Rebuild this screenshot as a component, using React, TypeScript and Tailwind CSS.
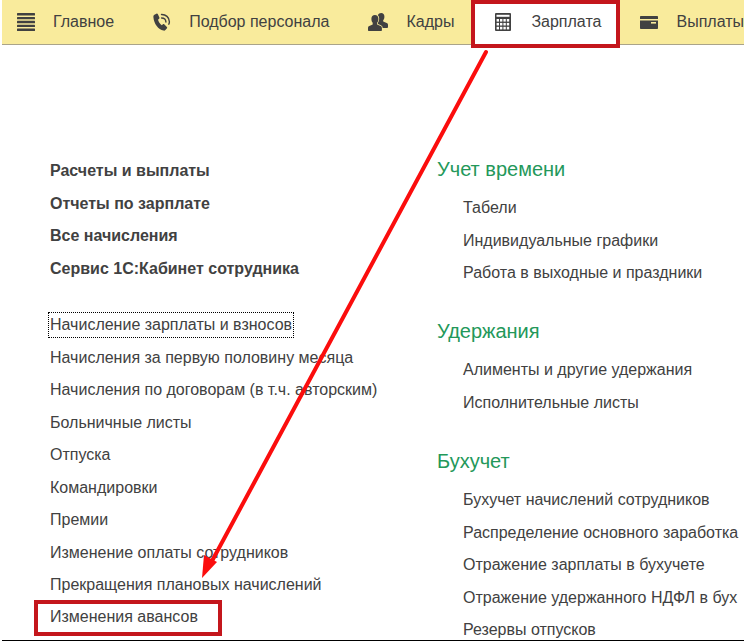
import type { ReactNode } from 'react';

type Section = {
  title: string;
  items: string[];
};

type NavItem = {
  label: string;
  icon: ReactNode;
  active?: boolean;
};

const MenuIcon: React.FC = () => (
  <svg width="18" height="18" viewBox="0 0 18 18" fill="currentColor" aria-hidden="true">
    <rect y="0" width="18" height="2.4" rx="0.5" />
    <rect y="3.9" width="18" height="2.4" rx="0.5" />
    <rect y="7.8" width="18" height="2.4" rx="0.5" />
    <rect y="11.7" width="18" height="2.4" rx="0.5" />
    <rect y="15.6" width="18" height="2.4" rx="0.5" />
  </svg>
);

const PhoneIcon: React.FC = () => (
  <svg width="18" height="18" viewBox="0 0 18 18" fill="none" aria-hidden="true">
    <path
      fill="currentColor"
      d="M1.4 1.8 3.4.7c.6-.3 1.2-.1 1.5.5l1.500 3.300c.2.500.1 1-.3 1.300L5 6.800c.6 2.200 1.800 4 3.700 5.400l1.300-.9c.5-.3 1-.2 1.400.1l2.500 2.500c.4.400.4.900.1 1.300l-1.600 1.900c-.5.5-1.200.7-1.900.5C5.300 16.300 1 11 .4 4.200c-.1-1.100.1-1.900 1-2.400Z"
    />
    <path stroke="currentColor" strokeWidth="1.4" strokeLinecap="round" d="M8.5 1.500c4.300-.1 7.700 2.700 7.900 7.200 0 .9-.2 1.800-.6 2.500" />
    <path stroke="currentColor" strokeWidth="1.4" strokeLinecap="round" d="M8.600 5c2.400 0 4.200 1.500 4.300 4" />
  </svg>
);

const PeopleIcon: React.FC = () => (
  <svg width="20" height="18" viewBox="0 0 20 18" fill="currentColor" aria-hidden="true">
    <path d="M13.2 0c2 0 3.200 1.300 3.200 3.400 0 1.600-.4 2.900-1.200 3.800v1.400l3.500 1.500c.9.4 1.300 1 1.300 2v2c0 .6-.3.900-.9.900H9V7L9.900 2C10.500.7 11.600 0 13.200 0Z" />
    <path
      stroke="#f9eb9c"
      strokeWidth="1.6"
      paintOrder="stroke"
      d="M6.900 2c2.200 0 3.500 1.500 3.500 3.700 0 1.800-.5 3.200-1.300 4.100v1.600l3.500 1.500c.9.400 1.300 1.100 1.300 2.100v2c0 .700-.3 1-1 1H1c-.7 0-1-.3-1-1v-2c0-1 .4-1.700 1.300-2.100l3.400-1.500v-1.600C3.900 8.900 3.400 7.500 3.400 5.700 3.400 3.500 4.700 2 6.900 2Z"
    />
  </svg>
);

const CalculatorIcon: React.FC = () => (
  <svg width="16" height="18" viewBox="0 0 16 18" aria-hidden="true">
    <rect width="16" height="18" rx="1" fill="currentColor" />
    <rect x="1.5" y="1.8" width="13" height="2" fill="white" />
    {[6, 9.9, 13.8].map((y) =>
      [1.6, 5, 8.4, 11.8].map((x) => (
        <rect key={`${x}-${y}`} x={x} y={y} width="2.4" height="2.6" fill="white" />
      ))
    )}
  </svg>
);

const CardIcon: React.FC = () => (
  <svg width="18" height="13" viewBox="0 0 18 13" aria-hidden="true">
    <path fill="currentColor" d="M.8 0h16.400c.5 0 .8.300.8.800V3H0V.8C0 .3.300 0 .8 0ZM0 4.500h18v7.700c0 .5-.3.800-.8.800H.8c-.5 0-.8-.3-.8-.8V4.500Z" />
    <rect x="11" y="6" width="5" height="1.6" fill="#f9eb9c" />
  </svg>
);

const navItems: NavItem[] = [
  { label: 'Главное', icon: <MenuIcon /> },
  { label: 'Подбор персонала', icon: <PhoneIcon /> },
  { label: 'Кадры', icon: <PeopleIcon /> },
  { label: 'Зарплата', icon: <CalculatorIcon />, active: true },
  { label: 'Выплаты', icon: <CardIcon /> },
];

const mainLinks = [
  'Расчеты и выплаты',
  'Отчеты по зарплате',
  'Все начисления',
  'Сервис 1С:Кабинет сотрудника',
];

const links = [
  'Начисление зарплаты и взносов',
  'Начисления за первую половину месяца',
  'Начисления по договорам (в т.ч. авторским)',
  'Больничные листы',
  'Отпуска',
  'Командировки',
  'Премии',
  'Изменение оплаты сотрудников',
  'Прекращения плановых начислений',
  'Изменения авансов',
];

const sections: Section[] = [
  {
    title: 'Учет времени',
    items: ['Табели', 'Индивидуальные графики', 'Работа в выходные и праздники'],
  },
  {
    title: 'Удержания',
    items: ['Алименты и другие удержания', 'Исполнительные листы'],
  },
  {
    title: 'Бухучет',
    items: [
      'Бухучет начислений сотрудников',
      'Распределение основного заработка',
      'Отражение зарплаты в бухучете',
      'Отражение удержанного НДФЛ в бух',
      'Резервы отпусков',
    ],
  },
];

const rowClass = 'flex items-center whitespace-nowrap odd:h-8 even:h-[33px]';

const NavBar: React.FC = () => (
  <nav className="flex h-[45px] border-b border-[#aaa489] bg-[#f9eb9c]">
    {navItems.map(({ label, icon, active }) => (
      <a
        key={label}
        href="#"
        className={
          active
            ? 'relative -ml-0.5 flex h-12 shrink-0 items-center gap-5 whitespace-nowrap border-4 border-[#c4161c] bg-white pb-1 pl-5 pr-[15px]'
            : 'flex h-11 shrink-0 items-center gap-[18px] whitespace-nowrap pl-5 pr-[19px] first:pl-[15px] last:pr-0'
        }
      >
        {icon}
        {label}
      </a>
    ))}
  </nav>
);

const LinkColumn: React.FC = () => (
  <div className="w-[435px] shrink-0 pl-12">
    <ul className="mb-6 font-bold">
      {mainLinks.map((link) => (
        <li key={link} className={rowClass}>
          <a href="#">{link}</a>
        </li>
      ))}
    </ul>
    <ul>
      {links.map((link, i) => (
        <li key={link} className={rowClass}>
          {i === 0 && (
            <a href="#" className="-ml-0.5 border border-dotted border-black px-px">
              {link}
            </a>
          )}
          {i > 0 && i < links.length - 1 && <a href="#">{link}</a>}
          {i === links.length - 1 && (
            <a href="#" className="-ml-4 border-4 border-[#c4161c] pb-[3px] pl-3 pr-5 pt-px">
              {link}
            </a>
          )}
        </li>
      ))}
    </ul>
  </div>
);

const SectionColumn: React.FC = () => (
  <div className="min-w-0 flex-1">
    {sections.map(({ title, items }) => (
      <section key={title} className="mb-7 last:-mb-1.5">
        <h2 className="mb-[9px] flex h-7 items-center text-[20px] text-[#23985a]">{title}</h2>
        <ul className="pl-[26px]">
          {items.map((item) => (
            <li key={item} className={rowClass}>
              <a href="#">{item}</a>
            </li>
          ))}
        </ul>
      </section>
    ))}
  </div>
);

const Arrow: React.FC = () => (
  <svg
    className="pointer-events-none absolute left-0 top-0"
    width="500"
    height="590"
    viewBox="0 0 500 590"
    fill="#fb0d0d"
    aria-hidden="true"
  >
    <path d="M484 52 210 561" stroke="#fb0d0d" strokeWidth="4" strokeLinecap="round" />
    <path d="M200 578 202 555 215 562Z" />
  </svg>
);

const App: React.FC = () => (
  <div className="relative ml-0.5 mr-[3px] overflow-hidden bg-white font-['Liberation_Sans',Arial,sans-serif] text-[16px] leading-6 text-[#414141]">
    <NavBar />
    <main className="flex border-b border-black pt-[110px]">
      <LinkColumn />
      <SectionColumn />
    </main>
    <Arrow />
  </div>
);

export default App;
